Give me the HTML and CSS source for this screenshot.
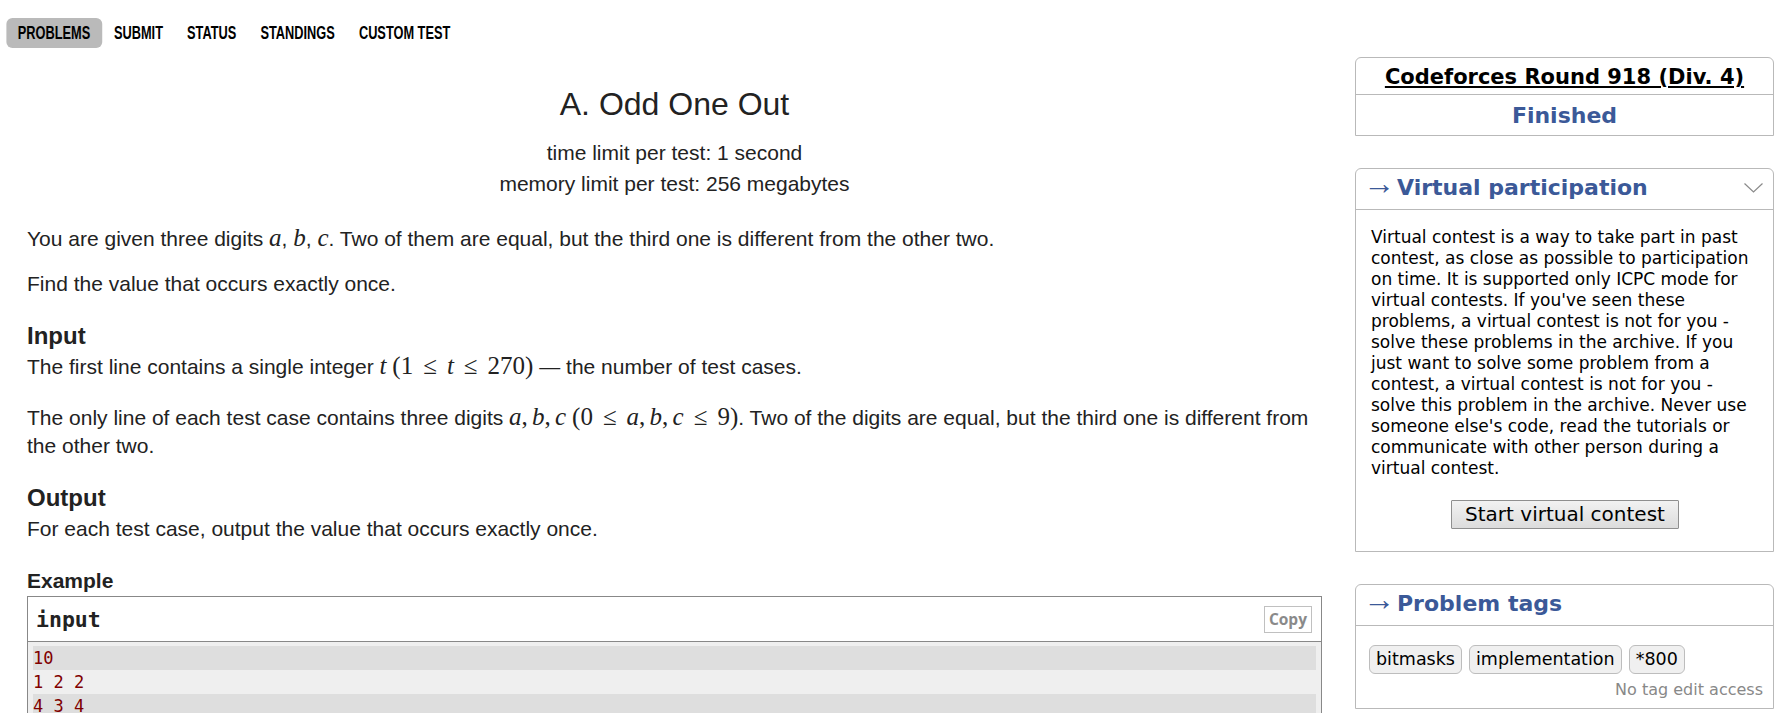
FILE: index.html
```html
<!DOCTYPE html>
<html>
<head>
<meta charset="utf-8">
<title>A. Odd One Out</title>
<link rel="stylesheet" href="styles.css">
</head>
<body>
<div class="page">
  <div class="main">
    <nav class="menu">
      <a class="menu-item active" href="#">PROBLEMS</a>
      <a class="menu-item" href="#">SUBMIT</a>
      <a class="menu-item" href="#">STATUS</a>
      <a class="menu-item" href="#">STANDINGS</a>
      <a class="menu-item" href="#">CUSTOM TEST</a>
    </nav>
    <div class="problem">
      <div class="header">
        <div class="title">A. Odd One Out</div>
        <div class="limit first">time limit per test: 1 second</div>
        <div class="limit">memory limit per test: 256 megabytes</div>
      </div>
      <div class="legend">
        <p>You are given three digits <span class="math"><i>a</i></span>, <span class="math"><i>b</i></span>, <span class="math"><i>c</i></span>. Two of them are equal, but the third one is different from the other two.</p>
        <p class="next">Find the value that occurs exactly once.</p>
      </div>
      <div class="section">
        <div class="section-title">Input</div>
        <p>The first line contains a single integer <span class="math"><i>t</i></span> <span class="math">(1 ≤ <i>t</i> ≤ 270)</span> — the number of test cases.</p>
        <p class="next">The only line of each test case contains three digits <span class="math tight"><i>a</i>, <i>b</i>, <i>c</i></span> <span class="math">(0 ≤ <i>a</i>,<span class="th"></span><i>b</i>,<span class="th"></span><i>c</i> ≤ 9)</span>. Two of the digits are equal, but the third one is different from the other two.</p>
      </div>
      <div class="section">
        <div class="section-title">Output</div>
        <p>For each test case, output the value that occurs exactly once.</p>
      </div>
      <div class="sample">
        <div class="sample-title">Example</div>
        <div class="sample-box">
          <div class="sample-head">
            <span class="sample-label">input</span>
            <button class="copy">Copy</button>
          </div>
          <pre class="sample-pre"><div class="line odd">10</div><div class="line">1 2 2</div><div class="line odd">4 3 4</div></pre>
        </div>
      </div>
    </div>
  </div>
  <aside class="sidebar">
    <div class="roundbox">
      <div class="contest-name"><a href="#">Codeforces Round 918 (Div. 4)</a></div>
      <div class="contest-phase">Finished</div>
    </div>
    <div class="roundbox">
      <div class="box-caption">
        <span class="caption-text"><span class="arrow">→</span>Virtual participation</span>
        <svg class="chevron" width="19" height="10" viewBox="0 0 19 10"><polyline points="0.5,0.5 9.5,9 18.5,0.5" fill="none" stroke="#8a8a8a" stroke-width="1.2"/></svg>
      </div>
      <div class="box-body">
        <p class="virtual-text">Virtual contest is a way to take part in past contest, as close as possible to participation on time. It is supported only ICPC mode for virtual contests. If you've seen these problems, a virtual contest is not for you - solve these problems in the archive. If you just want to solve some problem from a contest, a virtual contest is not for you - solve this problem in the archive. Never use someone else's code, read the tutorials or communicate with other person during a virtual contest.</p>
        <div class="btn-row"><button class="start-btn">Start virtual contest</button></div>
      </div>
    </div>
    <div class="roundbox">
      <div class="box-caption">
        <span class="caption-text"><span class="arrow">→</span>Problem tags</span>
      </div>
      <div class="tags-body">
        <div class="tags">
          <span class="tag">bitmasks</span>
          <span class="tag">implementation</span>
          <span class="tag">*800</span>
        </div>
        <div class="no-access">No tag edit access</div>
      </div>
    </div>
  </aside>
</div>
</body>
</html>
```
FILE: styles.css
```css
* { box-sizing: border-box; }
html, body { margin: 0; padding: 0; overflow: hidden; background: #fff; }
body { font-family: "Liberation Sans", Arial, sans-serif; color: #222; }

.page { display: flex; align-items: flex-start; }
.main { flex: 1; min-width: 0; }

/* top menu: narrow bold caps (condensed horizontally) */
.menu {
  display: flex; padding: 18px 0 0 8.5px;
  transform: scaleX(0.71); transform-origin: 0 0;
}
.menu-item {
  display: flex; align-items: center; height: 30px; padding: 1px 17px 0;
  font-family: "Liberation Sans", Arial, sans-serif;
  font-weight: bold; font-size: 18px; color: #000; text-decoration: none;
  border-radius: 8.5px / 6px;
}
.menu-item.active { background: #bababa; padding: 1px 16.5px 0; }

/* problem */
.problem { margin-left: 27px; }
.header { text-align: center; margin-top: 36px; }
.title { font-size: 32px; line-height: 40px; }
.limit { font-size: 21px; line-height: 31px; }
.limit.first { margin-top: 13px; }

p { margin: 0; font-size: 21px; line-height: 28px; }
.legend { margin-top: 26px; }
.legend p.next { margin-top: 17px; }

.section { margin-top: 23px; }
.section-title { font-size: 24px; font-weight: bold; line-height: 30px; margin-bottom: 2px; }
.section p.next { margin-top: 23px; }

.math {
  font-family: "Liberation Serif", "DejaVu Serif", serif; font-size: 25px; line-height: 1;
  word-spacing: 0.15em;
}
.math.tight { word-spacing: -0.08em; }
.math i { font-style: italic; }
.th { display: inline-block; width: 0.17em; }

/* sample */
.sample { margin-top: 24px; }
.sample-title { font-size: 21px; font-weight: bold; line-height: 28px; }
.sample-box { margin-top: 1px; border: 1px solid #888; }
.sample-head {
  display: flex; justify-content: space-between; align-items: center;
  height: 45px; padding: 0 9px 0 8px; border-bottom: 1px solid #888;
}
.sample-label { font-family: "DejaVu Sans Mono", monospace; font-weight: bold; font-size: 21.5px; color: #222; }
.copy {
  font-family: "Open Sans", sans-serif; font-weight: bold; font-size: 15.5px; color: #8a8a8a;
  background: #fff; border: 1px solid #c0c0c0; height: 27px; padding: 0 4px; line-height: 25px;
}
.sample-pre {
  margin: 0; padding: 4px 5px; background: #efefef;
  font-family: "DejaVu Sans Mono", monospace; font-size: 17px; line-height: 24px; color: #800000;
}
.line.odd { background: #dedede; }

/* sidebar */
.sidebar {
  width: 419px; flex-shrink: 0; margin: 57px 10px 0 33px;
  font-family: "DejaVu Sans", Verdana, sans-serif; color: #000;
}
.roundbox { border: 1px solid #b9b9b9; border-radius: 6px 6px 0 0; }
.roundbox + .roundbox { margin-top: 32px; }

.contest-name {
  height: 37px; padding-top: 2px; border-bottom: 1px solid #b9b9b9; text-align: center;
  font-weight: bold; font-size: 21px; line-height: 34px;
}
.contest-name a { color: #000; text-decoration: underline; }
.contest-phase {
  height: 40px; padding-top: 1px; text-align: center; font-weight: bold; font-size: 22px; line-height: 39px; color: #3b5998;
}

.box-caption {
  display: flex; align-items: center; height: 41px; padding: 0 10px 2px 7px;
  border-bottom: 1px solid #b9b9b9; color: #3b5998;
}
.caption-text { font-weight: bold; font-size: 22px; line-height: 30px; flex: 1; white-space: nowrap; }
.arrow {
  display: inline-block; width: 34px; font-family: "Liberation Serif", serif;
  font-weight: normal; font-size: 32px; line-height: 0; vertical-align: 1px;
}
.chevron { display: block; }

.box-body { padding: 17px 14px 22px 15px; }
.virtual-text { font-size: 17px; line-height: 21px; margin: 0; }
.btn-row { text-align: center; margin-top: 21px; }
.start-btn {
  font-family: "DejaVu Sans", Verdana, sans-serif; font-size: 20px; color: #000;
  height: 29px; padding: 0 13px; line-height: 25px;
  border: 1px solid #8f8f8f; border-radius: 1px;
  background: linear-gradient(#f2f2f2, #dcdcdc);
}

.tags-body { padding: 19px 10px 8px 13px; }
.tags { display: flex; gap: 7px; }
.tag {
  height: 29px; padding: 0 6px; line-height: 27px; font-size: 17.5px;
  border: 1px solid #bdbdbd; border-radius: 6px; background: #f0f0f0; color: #000;
}
.no-access { text-align: right; font-size: 16px; line-height: 20px; color: #888; margin-top: 6px; }
```
